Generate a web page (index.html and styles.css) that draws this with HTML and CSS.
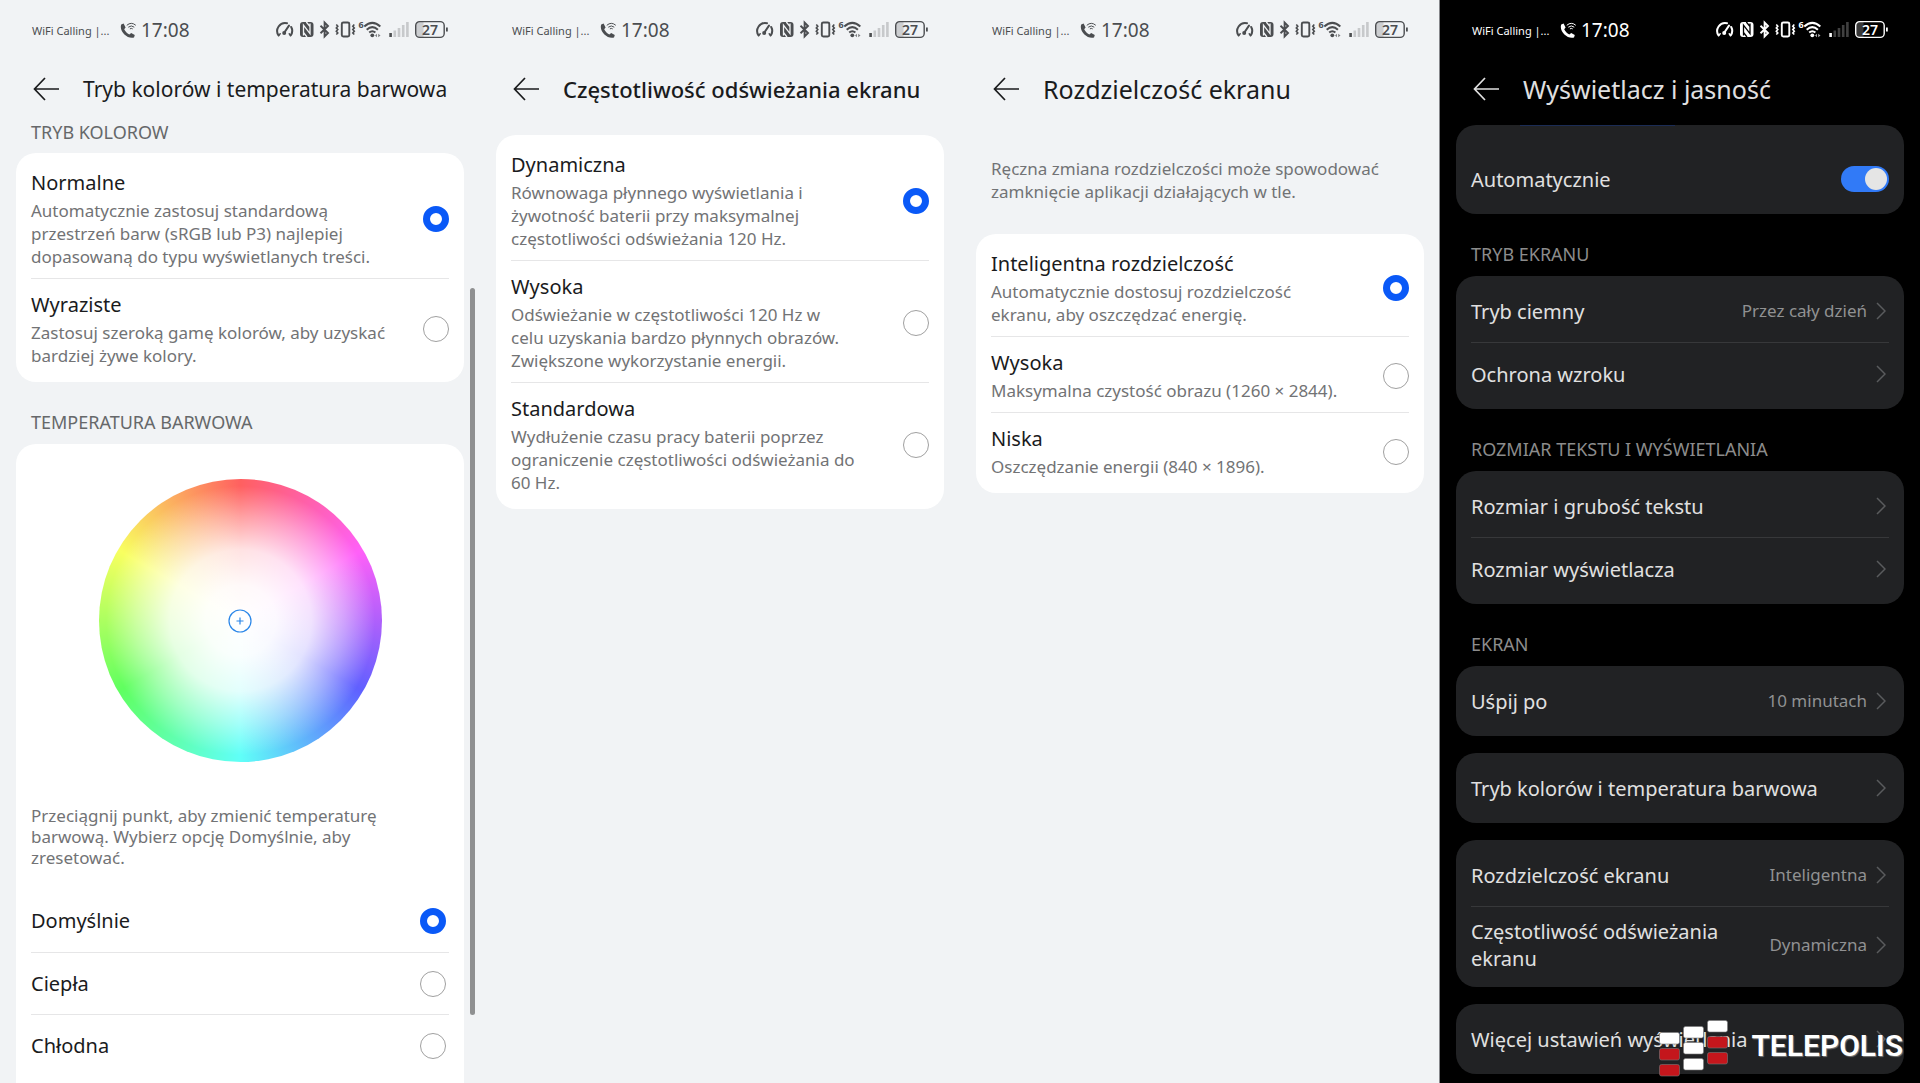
FILE: index.html
```html
<!DOCTYPE html>
<html lang="pl">
<head>
    <meta charset="UTF-8">
    <meta name="viewport" content="width=device-width, initial-scale=1.0">
    <title>Wyświetlacz i jasność</title>
    <link rel="stylesheet" href="styles.css">
</head>
<body>
    <!-- shared icons -->
    <svg class="sprite" aria-hidden="true">
        <symbol id="call" viewBox="0 0 17 17">
            <path d="M1.200 2.600 3.600 1.600 5.600 5.400 4.200 7.200C5.200 9.300 7 11.300 9.300 12.400L11.200 10.900 14.800 13 14 15.400C8 17.600-1.200 9.600 1.200 2.600Z" fill="currentColor"/>
            <g fill="none" stroke="currentColor" stroke-width="1"><path d="M6.800 3.300Q11.300-.6 15.800 3.300M8.300 5.200Q11.300 2.700 14.300 5.200M9.900 6.900Q11.300 5.900 12.700 6.900"/></g>
        </symbol>
        <symbol id="status" viewBox="0 0 175 20">
            <g fill="none" stroke="currentColor" stroke-width="2" stroke-linecap="round">
                <path d="M3.600 15.500A8 8 0 0 1 12 3.200M16.200 7A8 8 0 0 1 15.600 15.500"/>
                <path d="M9 13 14 5.600"/>
                <path d="M3.600 15.500 5.200 13.800M15.600 15.500 14.200 13.800" stroke-width="1.500"/>
            </g>
            <circle cx="9.200" cy="13" r="2" fill="currentColor"/>
            <rect x="25" y="2" width="13.500" height="15" rx="3" fill="currentColor"/>
            <path d="M28.500 15.500V5.200L35 13.600V3.500M31.300 2 35 6.500M28.500 12.500 32 17" fill="none" stroke="var(--bg)" stroke-width="1.300"/>
            <path d="M45.500 5.800 53 13 49.600 16.500V2.500L53 6 45.500 13.200" fill="none" stroke="currentColor" stroke-width="1.900"/>
            <rect x="66.800" y="2.500" width="7.500" height="14" rx="1.500" fill="none" stroke="currentColor" stroke-width="1.900"/>
            <path d="M61.300 4.500l1.500 1.700-1.500 1.700 1.500 1.700-1.500 1.700 1.500 1.700-1.500 1.500M79.300 4.500l-1.500 1.700 1.500 1.700-1.500 1.700 1.500 1.700-1.500 1.700 1.500 1.500" fill="none" stroke="currentColor" stroke-width="1.600"/>
            <text x="83.500" y="8" class="wifi-gen">6</text>
            <g fill="none" stroke="currentColor" stroke-width="2">
                <path d="M89.300 6.500Q97.300-.8 105.300 6.500M91.700 9.700Q97.300 4.500 102.900 9.700M94.200 12.600Q97.300 10 100.400 12.600"/>
            </g>
            <circle cx="97.300" cy="15.300" r="1.900" fill="currentColor"/>
            <path d="M100 15.500l2-1.800v3.600zM105.500 15.500l-2.300-1.800v3.600z" fill="currentColor" opacity=".7"/>
            <path d="M114.300 13h2.600v4h-2.600z" fill="currentColor"/>
            <path d="M118.500 10.500h2.600v6.500h-2.600zM122.700 8h2.600v9h-2.600zM126.900 5h2.600v12h-2.600zM131.100 2h2.600v15h-2.600z" fill="currentColor" opacity=".25"/>
            <path d="M144 2h4.500v15H144a3.500 3.500 0 0 1-3-3.500v-8A3.500 3.500 0 0 1 144 2z" fill="currentColor" opacity=".22"/>
            <rect x="140.700" y="1.600" width="28.500" height="15.800" rx="4" fill="none" stroke="currentColor" stroke-width="1.400"/>
            <path d="M171 7.500h1.800v4H171z" fill="currentColor"/>
            <text x="155" y="14.500" text-anchor="middle" class="charge">27</text>
        </symbol>
        <symbol id="back" viewBox="0 0 26 24">
            <path d="M12 1 1.500 12 12 23M1.500 12H26" fill="none" stroke="currentColor" stroke-width="1.700"/>
        </symbol>
        <symbol id="next" viewBox="0 0 10 18">
            <path d="M1 1 9 9 1 17" fill="none" stroke="currentColor" stroke-width="1.500"/>
        </symbol>
    </svg>

    <main class="screens">
        <section class="screen">
            <div class="status">
                <span class="operator">WiFi Calling |...</span>
                <svg class="call"><use href="#call"/></svg>
                <span class="time">17:08</span>
                <svg class="status-icons"><use href="#status"/></svg>
            </div>
            <header class="header">
                <button class="back" aria-label="Wstecz"><svg><use href="#back"/></svg></button>
                <h1 class="title title-long">Tryb kolorów i temperatura barwowa</h1>
            </header>
            <h2 class="label label-first">TRYB KOLOROW</h2>
            <div class="card">
                <label class="option">
                    <span class="text"><span class="name">Normalne</span><span class="desc">Automatycznie zastosuj standardową przestrzeń barw (sRGB lub P3) najlepiej dopasowaną do typu wyświetlanych treści.</span></span>
                    <input type="radio" name="mode" checked>
                </label>
                <label class="option">
                    <span class="text"><span class="name">Wyraziste</span><span class="desc">Zastosuj szeroką gamę kolorów, aby uzyskać bardziej żywe kolory.</span></span>
                    <input type="radio" name="mode">
                </label>
            </div>
            <h2 class="label">TEMPERATURA BARWOWA</h2>
            <div class="card card-temp">
                <div class="wheel">
                    <svg class="handle" viewBox="0 0 24 24"><circle cx="12" cy="12" r="11"/><path d="M12 8.500v7M8.500 12h7"/></svg>
                </div>
                <p class="hint">Przeciągnij punkt, aby zmienić temperaturę barwową. Wybierz opcję Domyślnie, aby zresetować.</p>
                <label class="row"><span class="name">Domyślnie</span><input type="radio" name="temp" checked></label>
                <label class="row"><span class="name">Ciepła</span><input type="radio" name="temp"></label>
                <label class="row"><span class="name">Chłodna</span><input type="radio" name="temp"></label>
            </div>
            <div class="scrollbar"></div>
        </section>

        <section class="screen">
            <div class="status">
                <span class="operator">WiFi Calling |...</span>
                <svg class="call"><use href="#call"/></svg>
                <span class="time">17:08</span>
                <svg class="status-icons"><use href="#status"/></svg>
            </div>
            <header class="header">
                <button class="back" aria-label="Wstecz"><svg><use href="#back"/></svg></button>
                <h1 class="title title-mid">Częstotliwość odświeżania ekranu</h1>
            </header>
            <div class="card card-top">
                <label class="option">
                    <span class="text"><span class="name">Dynamiczna</span><span class="desc">Równowaga płynnego wyświetlania i żywotność baterii przy maksymalnej częstotliwości odświeżania 120 Hz.</span></span>
                    <input type="radio" name="rate" checked>
                </label>
                <label class="option">
                    <span class="text"><span class="name">Wysoka</span><span class="desc">Odświeżanie w częstotliwości 120 Hz w<br>celu uzyskania bardzo płynnych obrazów. Zwiększone wykorzystanie energii.</span></span>
                    <input type="radio" name="rate">
                </label>
                <label class="option">
                    <span class="text"><span class="name">Standardowa</span><span class="desc">Wydłużenie czasu pracy baterii poprzez ograniczenie częstotliwości odświeżania do 60&nbsp;Hz.</span></span>
                    <input type="radio" name="rate">
                </label>
            </div>
        </section>

        <section class="screen">
            <div class="status">
                <span class="operator">WiFi Calling |...</span>
                <svg class="call"><use href="#call"/></svg>
                <span class="time">17:08</span>
                <svg class="status-icons"><use href="#status"/></svg>
            </div>
            <header class="header">
                <button class="back" aria-label="Wstecz"><svg><use href="#back"/></svg></button>
                <h1 class="title">Rozdzielczość ekranu</h1>
            </header>
            <p class="note">Ręczna zmiana rozdzielczości może spowodować zamknięcie aplikacji działających w tle.</p>
            <div class="card">
                <label class="option">
                    <span class="text"><span class="name">Inteligentna rozdzielczość</span><span class="desc">Automatycznie dostosuj rozdzielczość ekranu, aby oszczędzać energię.</span></span>
                    <input type="radio" name="res" checked>
                </label>
                <label class="option">
                    <span class="text"><span class="name">Wysoka</span><span class="desc">Maksymalna czystość obrazu (1260 × 2844).</span></span>
                    <input type="radio" name="res">
                </label>
                <label class="option">
                    <span class="text"><span class="name">Niska</span><span class="desc">Oszczędzanie energii (840 × 1896).</span></span>
                    <input type="radio" name="res">
                </label>
            </div>
        </section>

        <section class="screen dark">
            <div class="status">
                <span class="operator">WiFi Calling |...</span>
                <svg class="call"><use href="#call"/></svg>
                <span class="time">17:08</span>
                <svg class="status-icons"><use href="#status"/></svg>
            </div>
            <header class="header">
                <button class="back" aria-label="Wstecz"><svg><use href="#back"/></svg></button>
                <h1 class="title">Wyświetlacz i jasność</h1>
            </header>
            <div class="card card-auto">
                <label class="row"><span class="name">Automatycznie</span><input type="checkbox" class="switch" checked></label>
            </div>
            <h2 class="label">TRYB EKRANU</h2>
            <div class="card">
                <button class="row"><span class="name">Tryb ciemny</span><span class="value">Przez cały dzień</span><svg class="next"><use href="#next"/></svg></button>
                <button class="row"><span class="name">Ochrona wzroku</span><svg class="next"><use href="#next"/></svg></button>
            </div>
            <h2 class="label">ROZMIAR TEKSTU I WYŚWIETLANIA</h2>
            <div class="card">
                <button class="row"><span class="name">Rozmiar i grubość tekstu</span><svg class="next"><use href="#next"/></svg></button>
                <button class="row"><span class="name">Rozmiar wyświetlacza</span><svg class="next"><use href="#next"/></svg></button>
            </div>
            <h2 class="label">EKRAN</h2>
            <div class="card">
                <button class="row"><span class="name">Uśpij po</span><span class="value">10 minutach</span><svg class="next"><use href="#next"/></svg></button>
            </div>
            <div class="card">
                <button class="row"><span class="name">Tryb kolorów i temperatura barwowa</span><svg class="next"><use href="#next"/></svg></button>
            </div>
            <div class="card">
                <button class="row"><span class="name">Rozdzielczość ekranu</span><span class="value">Inteligentna</span><svg class="next"><use href="#next"/></svg></button>
                <button class="row"><span class="name">Częstotliwość odświeżania ekranu</span><span class="value">Dynamiczna</span><svg class="next"><use href="#next"/></svg></button>
            </div>
            <div class="card">
                <button class="row"><span class="name">Więcej ustawień wyświetlania</span><svg class="next"><use href="#next"/></svg></button>
            </div>
            <div class="logo">
                <svg viewBox="0 0 70 58">
                    <g fill="#fff" stroke="#777" stroke-width=".6">
                        <rect x="0.500" y="12.500" width="20" height="11.500" rx="2"/>
                        <rect x="24.500" y="6.500" width="20" height="11.500" rx="2"/>
                        <rect x="24.500" y="22.500" width="20" height="11.500" rx="2"/>
                        <rect x="24.500" y="38.500" width="20" height="11.500" rx="2"/>
                        <rect x="48.500" y="0.500" width="20" height="11.500" rx="2"/>
                    </g>
                    <g fill="#c4161c" stroke="#777" stroke-width=".6">
                        <rect x="0.500" y="28.500" width="20" height="11.500" rx="2"/>
                        <rect x="0.500" y="44.500" width="20" height="11.500" rx="2"/>
                        <rect x="48.500" y="16.500" width="20" height="11.500" rx="2"/>
                        <rect x="48.500" y="32.500" width="20" height="11.500" rx="2"/>
                    </g>
                </svg>
                <span>TELEPOLIS</span>
            </div>
        </section>
    </main>
</body>
</html>
```

FILE: styles.css
```css
* {
    box-sizing: border-box;
}
body {
    margin: 0;
    background-color: #f1f3f5;
    font-family: "Noto Sans", "Open Sans", sans-serif;
    color: #1a1b1d;
}
.sprite {
    display: none;
}
.screens {
    display: grid;
    grid-template-columns: repeat(4, 1fr);
    height: 100vh;
    overflow: hidden;
}
.screen {
    --bg: #f1f3f5;
    position: relative;
    padding: 0 16px;
    overflow: hidden;
    background-color: var(--bg);
}
.dark {
    --bg: #000;
    color: #e0e0e0;
    box-shadow: -1px 0 #85868a;
}

/* status bar */
.status {
    display: flex;
    align-items: center;
    height: 60px;
    padding: 0 14px 0 16px;
    color: #4b4d50;
}
.dark .status {
    color: #fff;
}
.operator {
    width: 88px;
    font-size: 11px;
    white-space: nowrap;
}
.call {
    width: 17px;
    height: 17px;
}
.time {
    margin-left: 4px;
    font-size: 19px;
    line-height: 28px;
}
.status-icons {
    width: 175px;
    height: 20px;
    margin-left: auto;
}
.wifi-gen {
    font-size: 9px;
    font-weight: bold;
    fill: currentColor;
}
.charge {
    font-size: 14px;
    font-weight: 600;
    fill: currentColor;
}

/* header */
.header {
    display: flex;
    align-items: center;
    height: 60px;
    padding: 0 0 2px 17px;
    gap: 24px;
}
.back {
    width: 26px;
    height: 24px;
    padding: 0;
    border: 0;
    background: none;
    color: inherit;
}
.back svg {
    display: block;
    width: 26px;
    height: 24px;
}
.title {
    margin: 0;
    font-size: 25px;
    font-weight: 450;
    line-height: 32px;
    white-space: nowrap;
}
.title-mid {
    font-size: 22px;
    font-weight: 500;
}
.title-long {
    font-size: 21px;
}
.dark .title {
    font-weight: 400;
}

/* cards */
.label {
    margin: 0;
    padding: 28px 15px 10px;
    font-size: 18px;
    font-weight: 400;
    line-height: 24px;
    color: #66686a;
}
.label-first {
    padding-top: 0;
    padding-bottom: 9px;
}
.dark .label {
    color: #8c8c8c;
}
.card {
    padding: 4px 15px 5px;
    border-radius: 20px;
    background-color: #fff;
}
.card + .card {
    margin-top: 17px;
}
.card-top {
    margin-top: 15px;
}
.dark .card {
    padding-bottom: 4px;
    background-color: #212224;
}
.option {
    display: flex;
    align-items: center;
    gap: 32px;
    padding: 12px 0 10px;
}
.option + .option {
    padding: 12px 0 10px;
    border-top: 1px solid #e6e6e7;
}
.text {
    flex: 1;
}
.name {
    display: block;
    font-size: 20px;
    line-height: 28px;
}
.option .name,
label .name {
    font-weight: 450;
}
.dark .name {
    font-weight: 400;
    line-height: 27px;
}
.desc {
    display: block;
    margin-top: 2px;
    font-size: 17px;
    line-height: 23px;
    color: #727375;
}
.note {
    margin: 0;
    padding: 37px 15px 31px;
    font-size: 17px;
    line-height: 23px;
    color: #727375;
}
input[type="radio"] {
    appearance: none;
    flex: none;
    width: 26px;
    height: 26px;
    margin: 0;
    border: 1px solid #a0a0a0;
    border-radius: 50%;
    background-color: #fff;
}
input[type="radio"]:checked {
    border: 7px solid #0a59f7;
}

/* rows */
.row {
    display: flex;
    align-items: center;
    width: 100%;
    min-height: 62px;
    padding: 0;
    border: 0;
    background: none;
    color: inherit;
    font-family: inherit;
    text-align: left;
}
.row .name {
    flex: 1;
}
.row + .row {
    border-top: 1px solid #e6e6e7;
}
.dark .row {
    padding: 11px 0;
}
.dark .row + .row {
    min-height: 63px;
    border-color: #37383a;
}
.value {
    margin-left: 16px;
    font-size: 17px;
    line-height: 24px;
    color: #909192;
}
.next {
    width: 10px;
    height: 18px;
    margin: 0 3px 0 9px;
    color: #5a5b5d;
}
.dark .card-auto {
    margin-top: 5px;
    padding-top: 23px;
    /* end of the brightness slider, scrolled under the header */
    background-image: linear-gradient(#1b2c55, #1b2c55);
    background-position: 64px 0;
    background-size: 155px 1px;
    background-repeat: no-repeat;
}
.switch {
    appearance: none;
    display: flex;
    justify-content: flex-end;
    width: 48px;
    height: 26px;
    margin: 0;
    padding: 2px;
    border-radius: 13px;
    background-color: #317af7;
}
.switch::before {
    content: "";
    width: 22px;
    height: 22px;
    border-radius: 50%;
    background-color: #e5e5e5;
}

/* colour temperature */
.card-temp {
    padding: 35px 15px 40px;
}
.card-temp input {
    margin-right: 3px;
}
.wheel {
    display: flex;
    align-items: center;
    justify-content: center;
    width: 283px;
    height: 283px;
    margin: 0 auto;
    border-radius: 50%;
    background:
        radial-gradient(closest-side, #fff 0%, rgba(255, 255, 255, .96) 25%, rgba(255, 255, 255, .82) 50%, rgba(255, 255, 255, .4) 74%, rgba(255, 255, 255, 0) 95%),
        conic-gradient(#ff6060, #ff60f8 60deg, #6060ff 120deg, #60fff8 180deg, #60ff60 240deg, #f8ff60 300deg, #ff6060);
}
.handle {
    width: 24px;
    height: 24px;
    fill: none;
    stroke: #2a86e8;
    stroke-width: 1.2;
}
.hint {
    margin: 0;
    padding: 43px 30px 22px 0;
    font-size: 17px;
    line-height: 21px;
    color: #727375;
}
.scrollbar {
    position: absolute;
    top: 288px;
    right: 5px;
    width: 5px;
    height: 727px;
    border-radius: 3px;
    background-color: #8f9091;
}

/* logo over the last card */
.logo {
    position: absolute;
    right: 17px;
    bottom: 5px;
    display: flex;
    align-items: center;
    gap: 22px;
    color: #fff;
    font-family: Roboto, sans-serif;
    font-size: 30px;
    font-weight: 600;
    line-height: 32px;
    text-shadow: 1px 1px 1px #777;
}
.logo svg {
    width: 70px;
    height: 58px;
}
.logo span {
    padding-bottom: 6px;
}
```
